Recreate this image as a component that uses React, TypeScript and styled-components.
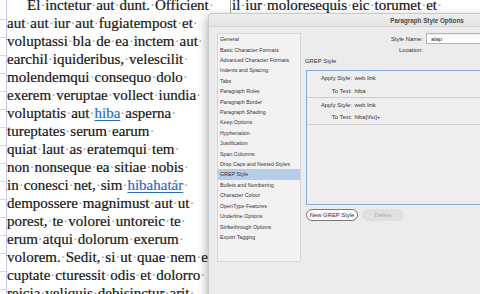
import React from 'react'
import styled, { createGlobalStyle } from 'styled-components'

type Segment = string | { link: string }

const column1: Segment[][] = [
    ['El inctetur aut dunt. Officient '],
    ['aut aut iur aut fugiatempost et '],
    ['voluptassi bla de ea inctem aut '],
    ['earchil iquideribus, velescilit '],
    ['molendemqui consequo dolo '],
    ['exerem veruptae vollect iundia '],
    ['voluptatis aut ', { link: 'hiba' }, ' asperna '],
    ['tureptates serum earum '],
    ['quiat laut as eratemqui tem '],
    ['non nonseque ea sitiae nobis '],
    ['in conesci net, sim ', { link: 'hibahatár' }, ' '],
    ['dempossere magnimust aut ut '],
    ['porest, te volorei untoreic te '],
    ['erum atqui dolorum exerum '],
    ['volorem. Sedit, si ut quae nem ea '],
    ['cuptate cturessit odis et dolorro '],
    ['reicia veliquis debisinctur arit '],
]

const column2: Segment[][] = [
    ['il iur moloresequis eic torumet et '],
]

const sections = [
    'General',
    'Basic Character Formats',
    'Advanced Character Formats',
    'Indents and Spacing',
    'Tabs',
    'Paragraph Rules',
    'Paragraph Border',
    'Paragraph Shading',
    'Keep Options',
    'Hyphenation',
    'Justification',
    'Span Columns',
    'Drop Caps and Nested Styles',
    'GREP Style',
    'Bullets and Numbering',
    'Character Colour',
    'OpenType Features',
    'Underline Options',
    'Strikethrough Options',
    'Export Tagging',
]

const grepRules = [
    { style: 'web link', text: 'hiba' },
    { style: 'web link', text: 'hiba[\\l\\u]+' },
]

const renderText = (text: string, key: string) => {
    const words = text.split(' ')
    return words.map((word, i) => (
        <React.Fragment key={key + i}>
            {word}
            {i < words.length - 1 && <Dot>·</Dot>}
        </React.Fragment>
    ))
}

const TextLine = ({ segments, indent = false }: { segments: Segment[]; indent?: boolean }) => (
    <Line $indent={indent}>
        {segments.map((seg, i) =>
            typeof seg === 'string'
                ? renderText(seg, 's' + i)
                : <Link key={'l' + i}>{seg.link}</Link>
        )}
    </Line>
)

const App = () => {
    return (
        <>
            <GlobalStyle />
            <Page>
                <Margin />
                <Column $width={205}>
                    {column1.map((line, i) => (
                        <TextLine key={i} segments={line} indent={i === 0} />
                    ))}
                </Column>
                <Gutter />
                <Column $width={248}>
                    {column2.map((line, i) => (
                        <TextLine key={i} segments={line} />
                    ))}
                </Column>

                <Dialog>
                    <TitleBar>Paragraph Style Options</TitleBar>
                    <DialogBody>
                        <SectionList>
                            {sections.map(name => (
                                <SectionItem key={name} $selected={name === 'GREP Style'}>
                                    {name}
                                </SectionItem>
                            ))}
                        </SectionList>

                        <Pane>
                            <FieldRow>
                                <FieldLabel>Style Name:</FieldLabel>
                                <NameInput>alap</NameInput>
                            </FieldRow>
                            <FieldRow>
                                <FieldLabel>Location:</FieldLabel>
                                <span />
                            </FieldRow>
                            <PaneTitle>GREP Style</PaneTitle>
                            <GrepBox>
                                {grepRules.map((rule, i) => (
                                    <GrepRule key={i}>
                                        <RuleLabel>Apply Style:</RuleLabel>
                                        <span>{rule.style}</span>
                                        <RuleLabel>To Text:</RuleLabel>
                                        <span>{rule.text}</span>
                                    </GrepRule>
                                ))}
                            </GrepBox>
                            <ButtonRow>
                                <PillButton>New GREP Style</PillButton>
                                <PillButton $disabled>Delete</PillButton>
                            </ButtonRow>
                        </Pane>
                    </DialogBody>
                </Dialog>
            </Page>
        </>
    )
}

export default App


const GlobalStyle = createGlobalStyle`
    html, body {
        margin: 0;
        padding: 0;
        background: #fff;
        overflow: hidden;
    }
`

const gridLines = `
    background: repeating-linear-gradient(
        to bottom,
        transparent 0,
        transparent 17px,
        #d9d9e3 17px,
        #d9d9e3 18px
    );
    background-position: 0 2px;
`

const Page = styled.div`
    position: relative;
    width: 480px;
    height: 294px;
    overflow: hidden;
    background: #fff;
    display: flex;
    align-items: flex-start;
`

const Margin = styled.div`
    flex: none;
    width: 6px;
    height: 294px;
    border-right: 1px solid #c9c4ec;
    ${gridLines}
`

const Gutter = styled.div`
    flex: none;
    width: 18px;
    height: 294px;
    border-right: 1px solid #9a9a9a;
    margin-right: 1px;
    ${gridLines}
`

const Column = styled.div<{ $width: number }>`
    flex: none;
    width: ${p => p.$width}px;
    margin-top: -4px;
    font-family: "Liberation Serif", "Times New Roman", serif;
    font-size: 15px;
    line-height: 18px;
    color: #161616;
    -webkit-text-stroke: 0.2px #161616;
`

const Line = styled.div<{ $indent: boolean }>`
    white-space: pre;
    padding-left: ${p => (p.$indent ? '20px' : '0')};
`

const Dot = styled.span`
    color: #8aa9dd;
    -webkit-text-stroke: 0;
`

const Link = styled.span`
    color: #2d6cb5;
    -webkit-text-stroke: 0.2px #2d6cb5;
    text-decoration: underline;
    text-decoration-thickness: 1px;
    text-underline-offset: 1.5px;
`

const Dialog = styled.div`
    position: absolute;
    left: 208px;
    top: 13px;
    width: 436px;
    height: 320px;
    background: #ececec;
    border: 1px solid rgba(0, 0, 0, 0.14);
    border-radius: 4px 4px 0 0;
    box-shadow: -2px 3px 10px rgba(0, 0, 0, 0.28);
    font-family: "Liberation Sans", Arial, sans-serif;
    color: #2b2b2b;
`

const TitleBar = styled.div`
    height: 12px;
    display: flex;
    align-items: center;
    justify-content: center;
    font-size: 6.3px;
    font-weight: bold;
    color: #4a4a4a;
    background: linear-gradient(#eeeeee, #e4e4e4);
    border-bottom: 1px solid #d5d5d5;
    border-radius: 4px 4px 0 0;
`

const DialogBody = styled.div`
    display: grid;
    grid-template-columns: 84px 1fr;
    column-gap: 4px;
    padding: 6px 0 0 8px;
`

const SectionList = styled.div`
    box-sizing: border-box;
    height: 229px;
    background: #f2f2f2;
    border: 1px solid #d8d8d8;
    font-size: 5.3px;
    color: #333;
`

const SectionItem = styled.div<{ $selected: boolean }>`
    height: 10.42px;
    display: flex;
    align-items: center;
    padding-left: 2px;
    white-space: nowrap;
    background: ${p => (p.$selected ? '#b6cdea' : 'transparent')};
`

const Pane = styled.div`
    display: flex;
    flex-direction: column;
    font-size: 5.9px;
`

const FieldRow = styled.div`
    display: grid;
    grid-template-columns: 118px 1fr;
    column-gap: 3px;
    align-items: center;
    height: 11px;
`

const FieldLabel = styled.span`
    text-align: right;
    color: #333;
`

const NameInput = styled.div`
    box-sizing: border-box;
    height: 10.5px;
    width: 220px;
    display: flex;
    align-items: center;
    padding-left: 4px;
    background: #fff;
    border: 1px solid #b4b4b4;
    box-shadow: inset 0 1px 1px rgba(0, 0, 0, 0.08);
`

const PaneTitle = styled.div`
    height: 11px;
    display: flex;
    align-items: center;
    color: #333;
`

const GrepBox = styled.div`
    box-sizing: border-box;
    margin: 4px 0 0 1px;
    height: 135px;
    background: #eeeeee;
    border: 1px solid #86a9e0;
`

const GrepRule = styled.div`
    display: grid;
    grid-template-columns: 45px 1fr;
    grid-auto-rows: 12.4px;
    column-gap: 2.5px;
    align-items: center;
    padding-top: 1px;
    border-bottom: 1px solid #cfcfcf;
    color: #333;
`

const RuleLabel = styled.span`
    text-align: right;
`

const ButtonRow = styled.div`
    display: flex;
    gap: 4px;
    margin: 4px 0 0 1px;
`

const PillButton = styled.div<{ $disabled?: boolean }>`
    box-sizing: border-box;
    height: 12px;
    width: ${p => (p.$disabled ? '42px' : '52px')};
    display: flex;
    align-items: center;
    justify-content: center;
    border-radius: 6px;
    background: ${p => (p.$disabled ? '#e0e0e0' : '#fafafa')};
    color: ${p => (p.$disabled ? '#a9a9a9' : '#333')};
    border: 1px solid ${p => (p.$disabled ? '#e0e0e0' : '#777')};
    box-shadow: ${p => (p.$disabled ? 'none' : 'inset 0 0 0 1px #fff')};
`
